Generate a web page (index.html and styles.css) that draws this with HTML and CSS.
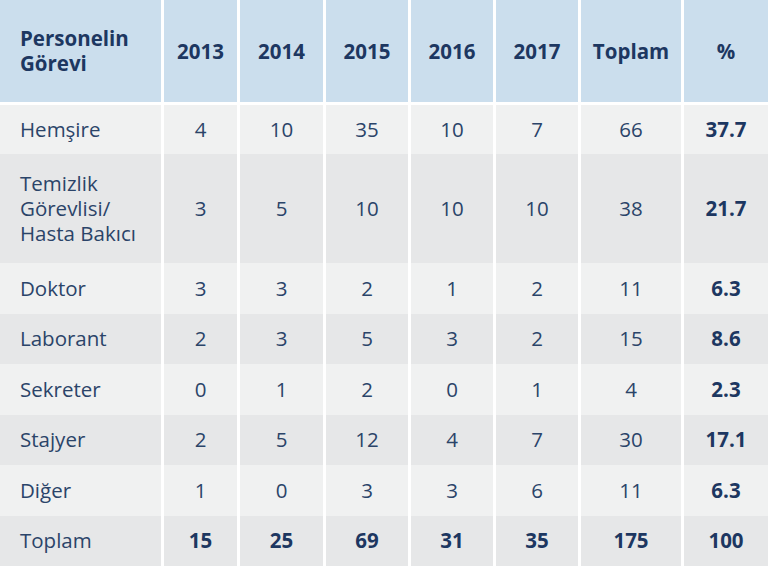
FILE: index.html
```html
<!DOCTYPE html>
<html lang="tr">
<head>
<meta charset="utf-8">
<title>Personel Tablosu</title>
<link rel="stylesheet" href="styles.css">
</head>
<body>
<div class="tbl" role="table">
  <div class="row head" role="row">
    <div class="cell label">Personelin Görevi</div>
    <div class="cell">2013</div>
    <div class="cell">2014</div>
    <div class="cell">2015</div>
    <div class="cell">2016</div>
    <div class="cell">2017</div>
    <div class="cell">Toplam</div>
    <div class="cell">%</div>
  </div>
  <div class="row light" role="row">
    <div class="cell label">Hemşire</div>
    <div class="cell">4</div><div class="cell">10</div><div class="cell">35</div><div class="cell">10</div><div class="cell">7</div><div class="cell">66</div><div class="cell b">37.7</div>
  </div>
  <div class="row dark" role="row">
    <div class="cell label">Temizlik Görevlisi/ Hasta Bakıcı</div>
    <div class="cell">3</div><div class="cell">5</div><div class="cell">10</div><div class="cell">10</div><div class="cell">10</div><div class="cell">38</div><div class="cell b">21.7</div>
  </div>
  <div class="row light" role="row">
    <div class="cell label">Doktor</div>
    <div class="cell">3</div><div class="cell">3</div><div class="cell">2</div><div class="cell">1</div><div class="cell">2</div><div class="cell">11</div><div class="cell b">6.3</div>
  </div>
  <div class="row dark" role="row">
    <div class="cell label">Laborant</div>
    <div class="cell">2</div><div class="cell">3</div><div class="cell">5</div><div class="cell">3</div><div class="cell">2</div><div class="cell">15</div><div class="cell b">8.6</div>
  </div>
  <div class="row light" role="row">
    <div class="cell label">Sekreter</div>
    <div class="cell">0</div><div class="cell">1</div><div class="cell">2</div><div class="cell">0</div><div class="cell">1</div><div class="cell">4</div><div class="cell b">2.3</div>
  </div>
  <div class="row dark" role="row">
    <div class="cell label">Stajyer</div>
    <div class="cell">2</div><div class="cell">5</div><div class="cell">12</div><div class="cell">4</div><div class="cell">7</div><div class="cell">30</div><div class="cell b">17.1</div>
  </div>
  <div class="row light" role="row">
    <div class="cell label">Diğer</div>
    <div class="cell">1</div><div class="cell">0</div><div class="cell">3</div><div class="cell">3</div><div class="cell">6</div><div class="cell">11</div><div class="cell b">6.3</div>
  </div>
  <div class="row dark total" role="row">
    <div class="cell label">Toplam</div>
    <div class="cell b">15</div><div class="cell b">25</div><div class="cell b">69</div><div class="cell b">31</div><div class="cell b">35</div><div class="cell b">175</div><div class="cell b">100</div>
  </div>
</div>
</body>
</html>
```

FILE: styles.css
```css
html, body {
  margin: 0;
  padding: 0;
  background: #ffffff;
}

body {
  font-family: "Open Sans", "Noto Sans", sans-serif;
  font-size: 20.5px;
  line-height: 25px;
  color: #2b4469;
}

.tbl {
  width: 768px;
  display: grid;
  grid-template-columns: 161px 73px 83px 82px 82px 82px 100px 84px;
  grid-template-rows: 105px 49px 109px repeat(6, 50.5px);
  column-gap: 3px;
}

.row {
  display: contents;
}

.cell {
  display: flex;
  align-items: center;
  justify-content: center;
  text-align: center;
  box-sizing: border-box;
}

.cell.label {
  justify-content: flex-start;
  text-align: left;
  padding: 0 12px 0 20px;
}

.head .cell {
  background: #cbdeed;
  border-bottom: 3px solid #ffffff;
  font-weight: 700;
  color: #1d3761;
}

.light .cell {
  background: #f0f1f1;
}

.dark .cell {
  background: #e6e7e8;
}

.cell.b {
  font-weight: 700;
  color: #1d3761;
}
```
